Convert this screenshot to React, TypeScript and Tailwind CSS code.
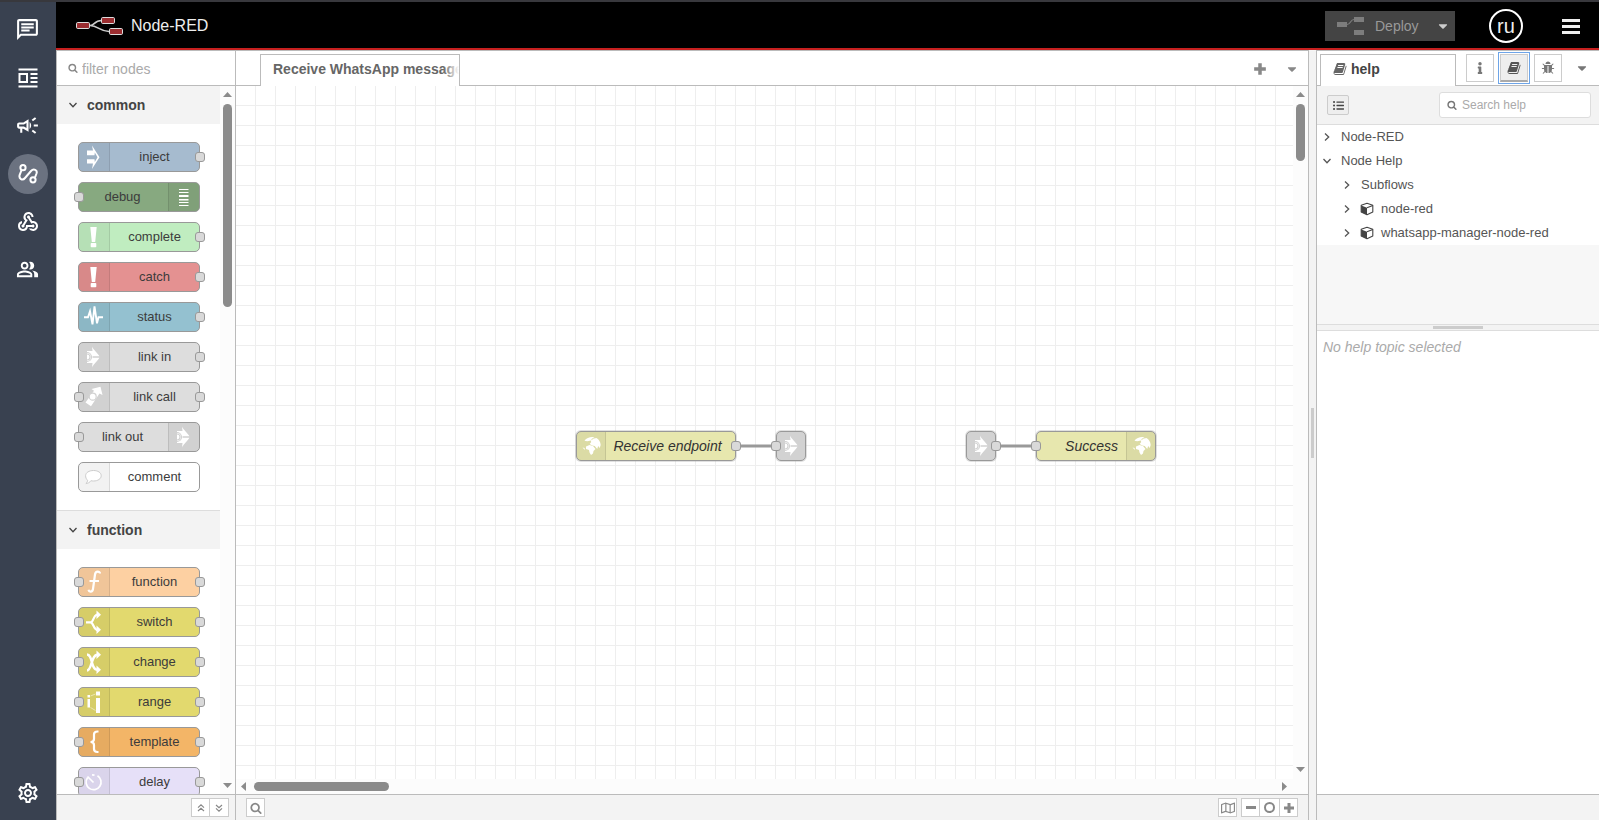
import type { ReactNode } from 'react';
import { MdOutlineChat, MdOutlineCampaign, MdWebhook, MdOutlinePeopleAlt, MdOutlineSettings } from 'react-icons/md';
import { FaCaretDown, FaInfo, FaListUl, FaRegMap } from 'react-icons/fa';
import { clsx } from 'clsx';

type IconProps = { className?: string };

const Search = ({ className }: IconProps) => (
  <svg viewBox="0 0 1792 1792" fill="currentColor" className={className}>
    <path d="M1216 832q0-185-131.5-316.5t-316.5-131.5-316.5 131.5-131.5 316.5 131.5 316.5 316.5 131.5 316.5-131.5 131.5-316.5zm512 832q0 52-38 90t-90 38q-54 0-90-38l-343-342q-179 124-399 124-143 0-273.5-55.5t-225-150-150-225-55.5-273.5 55.5-273.5 150-225 225-150 273.5-55.5 273.5 55.5 225 150 150 225 55.5 273.5q0 220-124 399l343 343q37 37 37 90z" />
  </svg>
);

const Book = ({ className }: IconProps) => (
  <svg viewBox="0 0 1792 1792" fill="currentColor" className={className}>
    <path d="M1703 478q40 57 18 129l-275 906q-19 64-76.5 107.5t-122.5 43.5h-923q-77 0-148.5-53.5t-99.5-131.5q-24-67-2-127 0-4 3-27t4-37q1-8-3-21.5t-3-19.5q2-11 8-21t16.5-23.5 16.5-23.5q23-38 45-91.5t30-91.5q3-10 .5-30t-.5-28q3-11 17-28t17-23q21-36 42-92t25-90q1-9-2.5-32t.5-28q4-13 22-30.5t22-22.5q19-26 42.5-84.5t27.5-96.5q1-8-3-25.5t-2-26.5q2-8 9-18t18-23 17-21q8-12 16.5-30.5t15-35 16-36 19.5-32 26.5-23.5 36-11.5 47.5 5.5l-1 3q38-9 51-9h761q74 0 114 56t18 130l-274 906q-36 119-71.5 153.5t-128.5 34.5h-869q-27 0-38 15-11 16-1 43 24 70 144 70h923q29 0 56-15.5t35-41.5l300-987q7-22 5-57 38 15 59 43zm-1064 2q-4 13 2 22.5t20 9.5h608q13 0 25.5-9.5t16.5-22.5l21-64q4-13-2-22.5t-20-9.5h-608q-13 0-25.5 9.5t-16.5 22.5zm-83 256q-4 13 2 22.5t20 9.5h608q13 0 25.5-9.5t16.5-22.5l21-64q4-13-2-22.5t-20-9.5h-608q-13 0-25.5 9.5t-16.5 22.5z" />
  </svg>
);

const Bug = ({ className }: IconProps) => (
  <svg viewBox="0 0 1792 1792" fill="currentColor" className={className}>
    <path d="M1696 960q0 26-19 45t-45 19h-224q0 171-67 290l208 209q19 19 19 45t-19 45q-18 19-45 19t-45-19l-198-197q-5 5-15 13t-42 28.5-65 36.5-82 29-97 13v-896h-128v896q-51 0-101.5-13.5t-87-33-66-39-43.5-32.5l-15-14-183 207q-20 21-48 21-24 0-43-16-19-18-20.5-44.5t15.5-46.5l202-227q-58-114-58-274h-224q-26 0-45-19t-19-45 19-45 45-19h224v-294l-173-173q-19-19-19-45t19-45 45-19 45 19l173 173h844l173-173q19-19 45-19t45 19 19 45-19 45l-173 173v294h224q26 0 45 19t19 45zm-480-576h-640q0-133 93.5-226.5t226.5-93.5 226.5 93.5 93.5 226.5z" />
  </svg>
);

const Plus = ({ className }: IconProps) => (
  <svg viewBox="0 0 12 12" fill="currentColor" className={className}>
    <path d="M4.500 1h3v3.500H11v3H7.500V11h-3V7.500H1v-3h3.500z" />
  </svg>
);

const Chevron = ({ className }: IconProps) => (
  <svg viewBox="0 0 10 10" fill="none" stroke="currentColor" strokeWidth="1.300" className={className}>
    <path d="M1.500 3l3.500 3.700L8.500 3" />
  </svg>
);

const DoubleChevron = ({ className }: IconProps) => (
  <svg viewBox="0 0 10 10" fill="none" stroke="currentColor" strokeWidth="1.200" className={className}>
    <path d="M2 2l3 2.700L8 2M2 5.400l3 2.700 3-2.700" />
  </svg>
);

const Cube = () => (
  <svg viewBox="0 0 14 14" className="h-3.5 w-3.5 text-[#444]">
    <path d="M7 1.300L12.800 3.300v6.700L7 12.700 1.200 10V3.300z" fill="none" stroke="currentColor" strokeWidth="1.100" strokeLinejoin="round" />
    <path d="M1.200 3.500L7 5.700v7L1.200 10z" fill="currentColor" />
    <path d="M7 5.700l5.800-2.300" stroke="currentColor" strokeWidth="1.100" />
  </svg>
);

const Logo = () => (
  <svg viewBox="0 0 48 20" className="h-5 w-12">
    <path d="M14 9.500c5 0 4-5 11.500-5M14 9.500c8 0 10 6 19 6" fill="none" stroke="#ccc" strokeWidth="1.600" />
    <g fill="#9b2d30" stroke="#ddd">
      <rect x=".5" y="6.500" width="13" height="6" rx="1.200" />
      <rect x="25.500" y="1.500" width="13" height="6" rx="1.200" />
      <rect x="33.500" y="12.500" width="13" height="6" rx="1.200" />
    </g>
  </svg>
);

const DeployIcon = () => (
  <svg viewBox="0 0 28 20" className="h-5 w-7" fill="#7d7d7d">
    <rect x="0" y="6" width="10" height="5" />
    <rect x="17" y="1" width="10" height="5" />
    <rect x="17" y="14" width="10" height="5" />
    <path d="M10 8.500c4 0 3-5 7-5" fill="none" stroke="#7d7d7d" strokeWidth="1.200" />
  </svg>
);

const Feed = () => (
  <svg viewBox="0 0 20 20" className="h-5 w-5" fill="none" stroke="white" strokeWidth="2">
    <path d="M.5 1.500h19M.5 18.500h19M12.500 6h7M12.500 10h7M12.500 14h7" strokeWidth="1.900" />
    <rect x="1.500" y="6" width="7.500" height="8" />
  </svg>
);

const Flow = () => (
  <svg viewBox="0 0 20 20" className="h-5 w-5" fill="none" stroke="white" strokeWidth="2">
    <circle cx="5" cy="3.700" r="2.600" />
    <circle cx="15" cy="15.800" r="2.600" />
    <path d="M3.600 6L1.700 10.800c-1.200 4 2.800 6.200 5.300 3.200l6-7c2.700-3 6.700-1 5.500 2.500L17 13.500" />
  </svg>
);

const Globe = () => (
  <>
    <path d="M7.500 8.500C9.500 6 13 4.700 16 5l1.500 1-2.500.5-1 2-3.500.8-2-.3z" />
    <path d="M17 6.500l2.500-.5c2.500 1.500 4 4 4.200 7l-1 3-1.500-2-1 3-2.500-3-2.500-.5-2.500-1.500 1.500-2-.5-1.500z" />
    <path d="M9 14.500l3.500-1.500 3.500 1 2.500 3-2 2-.5 2.500-2 1.500-1.500-2.500-.5-2.500-3-1zM5.500 15.500l2 .5.500 2z" />
  </>
);

const LinkArrow = () => (
  <>
    <path d="M8 8h5.500L13 3.500c1 2.500 4 5 7.500 9.800h-7v1.400h7C17 19.500 14 22 13 24.500l.5-4.500H8z" />
    <path d="M8 9.500a4.500 4.500 0 0 1 0 9M8 11a3 3 0 0 1 0 6" fill="none" stroke="#d2d2d2" strokeWidth="1.100" />
  </>
);

const glyphs: Record<string, ReactNode> = {
  inject: <path d="M8 7.500h6L13 2.500l7.500 11.700L13 26l1-5.500H8v-4.300h7.500l.3 2.800 2.700-4.800-2.700-4.700-.3 2.800H8z" />,
  debug: <path d="M10 6h9.500v1H10zM10 9h9.500v1H10zM10 12h9.500v2H10zM10 16h9.500v1.500H10zM10 19h9.500v1H10zM10 22h9.500v1H10z" />,
  bang: <path d="M11.300 4h6.400l-1.500 15h-3.400zM12.500 20h4a.8.8 0 0 1 .8.800v2.700a.8.800 0 0 1-.8.800h-4a.8.800 0 0 1-.8-.8v-2.700a.8.800 0 0 1 .8-.8z" />,
  status: <path d="M5 14.300h4l2-6 2.500 13 2-18 2.500 17 1.500-6h4.500" fill="none" stroke="white" strokeWidth="1.900" />,
  link: <LinkArrow />,
  linkCall: (
    <>
      <path d="M12.500 6l9-2.200 2 8.200-3-1.500L12 23.300 6.500 19.500 15 7.700z" />
      <circle cx="13.700" cy="13.700" r="3.500" stroke="#d2d2d2" strokeWidth="1.200" />
    </>
  ),
  comment: <path d="M14.500 7.500c4.500 0 7.700 2.200 7.700 5.200s-3.200 5.300-7.700 5.300c-1 0-1.800-.1-2.600-.3-1 1.700-3 2.800-5 2.800 1.200-.8 1.700-2 1.700-3.300-1.300-1-2-2.700-2-4.500 0-3 3.400-5.200 7.900-5.200z" stroke="#ccc" />,
  function: <path d="M21 5.500c0-2.500-4.500-3-5 1L14 21c-.5 3.500-4 3.300-4.500.8M10.500 13h9.500" fill="none" stroke="white" strokeWidth="2.200" />,
  switch: (
    <>
      <path d="M7 14.300h4.500c3 0 2.500-6 6-7.500h2M11.500 14.300c3 0 2.500 6 6 7.500h2" fill="none" stroke="white" strokeWidth="2.200" />
      <path d="M17.500 2.500l4.500 4.200-4.500 4.300zM17.500 17.500l4.500 4.300-4.500 4.200z" />
    </>
  ),
  change: (
    <>
      <path d="M8 6.500c6 0 3.500 15.300 10.500 15.300M8 22.500c5 0 4-15.800 10.500-15.800" fill="none" stroke="white" strokeWidth="2.400" />
      <path d="M17.500 2.500l4.500 4.200-4.500 4.300zM17.500 17.500l4.500 4.300-4.500 4.200z" />
    </>
  ),
  range: (
    <>
      <path d="M8.500 7H11v2.500H8.500zM8.500 11H11v8.500H8.500zM17 3.500h4v4h-4zM17 10h4v15h-4z" />
      <path d="M11.500 8l5-2M11.500 19.500l5 3" stroke="white" strokeWidth=".7" opacity=".7" />
    </>
  ),
  template: <path d="M19.500 3.500h-1c-2.500 0-3.500 1-3.500 3v4.500c0 2-1 3-3.500 3 2.500 0 3.500 1 3.500 3v4c0 2 1 3 3.500 3h1" fill="none" stroke="white" strokeWidth="2.200" />,
  delay: <path d="M18.500 7.800a7.500 7.500 0 1 1-10 2M8.500 8.500l6 6M13 6.800l2.500.3" fill="none" stroke="white" strokeWidth="1.700" />,
  globe: <Globe />,
};

const Glyph = ({ name }: { name: string }) => (
  <svg viewBox="0 0 30 28" className="h-7 w-[30px]" fill="white">{glyphs[name]}</svg>
);

const Port = ({ className }: IconProps) => (
  <span className={clsx('absolute top-[9px] h-2.5 w-2.5 rounded-[3px] border border-[#999] bg-[#d9d9d9]', className)} />
);

interface NodeDef {
  label: string;
  icon: string;
  color: string;
  input?: boolean;
  output?: boolean;
  iconRight?: boolean;
}

const categories: { name: string; nodes: NodeDef[] }[] = [
  {
    name: 'common',
    nodes: [
      { label: 'inject', icon: 'inject', color: 'bg-[#a6bbcf]', output: true },
      { label: 'debug', icon: 'debug', color: 'bg-[#87a980]', input: true, iconRight: true },
      { label: 'complete', icon: 'bang', color: 'bg-[#c0edc0]', output: true },
      { label: 'catch', icon: 'bang', color: 'bg-[#e49191]', output: true },
      { label: 'status', icon: 'status', color: 'bg-[#94c1d0]', output: true },
      { label: 'link in', icon: 'link', color: 'bg-[#ddd]', output: true },
      { label: 'link call', icon: 'linkCall', color: 'bg-[#ddd]', input: true, output: true },
      { label: 'link out', icon: 'link', color: 'bg-[#ddd]', input: true, iconRight: true },
      { label: 'comment', icon: 'comment', color: 'bg-white' },
    ],
  },
  {
    name: 'function',
    nodes: [
      { label: 'function', icon: 'function', color: 'bg-[#fdd0a2]', input: true, output: true },
      { label: 'switch', icon: 'switch', color: 'bg-[#e2d96e]', input: true, output: true },
      { label: 'change', icon: 'change', color: 'bg-[#e2d96e]', input: true, output: true },
      { label: 'range', icon: 'range', color: 'bg-[#e2d96e]', input: true, output: true },
      { label: 'template', icon: 'template', color: 'bg-[#f3b567]', input: true, output: true },
      { label: 'delay', icon: 'delay', color: 'bg-[#e6e0f8]', input: true, output: true },
    ],
  },
];

function PaletteNode({ label, icon, color, input, output, iconRight }: NodeDef) {
  return (
    <li className={clsx('relative flex h-[30px] w-[122px] rounded-[5px] border border-[#999]', color, iconRight && 'flex-row-reverse')}>
      <span className={clsx('w-[31px] shrink-0 border-black/10 bg-black/5', iconRight ? 'rounded-r border-l' : 'rounded-l border-r')}>
        <Glyph name={icon} />
      </span>
      <span className={clsx('flex-1 text-center text-[13px] leading-7 text-[#3c3c3c]', iconRight && 'pr-0.5')}>{label}</span>
      {input && <Port className="-left-[5px]" />}
      {output && <Port className="-right-1.5" />}
    </li>
  );
}

const ArrowV = ({ down }: { down?: boolean }) => (
  <svg viewBox="0 0 9 5" className="h-[5px] w-[9px]" fill="#8b8b8b">
    <path d={down ? 'M0 0h9L4.500 5z' : 'M0 5h9L4.500 0z'} />
  </svg>
);

const ArrowH = ({ right }: { right?: boolean }) => (
  <svg viewBox="0 0 5 9" className="h-[9px] w-[5px]" fill="#8b8b8b">
    <path d={right ? 'M0 0v9l5-4.500z' : 'M5 0v9L0 4.500z'} />
  </svg>
);

function Palette() {
  return (
    <section className="flex w-[180px] shrink-0 flex-col border-x border-t border-[#bbb]">
      <label className="flex h-[35px] shrink-0 items-center border-b border-[#bbb] pl-[11px]">
        <Search className="h-2.5 w-2.5 shrink-0 text-[#888]" />
        <input aria-label="Filter nodes" placeholder="filter nodes" className="ml-1 w-full min-w-0 pt-0.5 text-sm outline-none placeholder:text-[#aaa]" />
      </label>
      <div className="flex min-h-0 flex-1">
        <div className="min-w-0 flex-1 overflow-hidden">
          {categories.map(({ name, nodes }) => (
            <div key={name} className="border-b border-[#ddd]">
              <button className="flex h-[38px] w-full items-center gap-[9px] bg-[#f3f3f3] pl-[11px] text-sm font-bold text-[#444]">
                <Chevron className="h-2.5 w-2.5" />
                {name}
              </button>
              <ul className="flex flex-col gap-2.5 py-[18px] pl-[21px]">
                {nodes.map((node) => <PaletteNode key={node.label} {...node} />)}
              </ul>
            </div>
          ))}
        </div>
        <div className="flex w-[15px] flex-col items-center bg-[#fcfcfc] pt-1.5 pb-1.5">
          <ArrowV />
          <div className="mt-[7px] h-[203px] w-[9px] rounded-full bg-[#8b8b8b]" />
          <div className="flex-1" />
          <ArrowV down />
        </div>
      </div>
      <footer className="flex h-[26px] shrink-0 items-center justify-end border-t border-[#bbb] bg-[#f3f3f3] pr-1.5">
        <button aria-label="Collapse all" className="flex h-[19px] w-[19px] items-center justify-center border border-[#ccc] bg-white text-[#888]">
          <DoubleChevron className="h-2.5 w-2.5 rotate-180" />
        </button>
        <button aria-label="Expand all" className="flex h-[19px] w-[19px] items-center justify-center border border-l-0 border-[#ccc] bg-white text-[#888]">
          <DoubleChevron className="h-2.5 w-2.5" />
        </button>
      </footer>
    </section>
  );
}

// Nodes sit at free coordinates on the flow canvas
function FlowCanvas() {
  return (
    <div className="relative min-w-0 flex-1 overflow-hidden bg-white bg-[linear-gradient(to_right,transparent_19px,#eee_19px),linear-gradient(to_bottom,transparent_19px,#eee_19px)] bg-[size:20px_20px]">
      <svg className="absolute inset-0 h-full w-full" stroke="#999" strokeWidth="3">
        <path d="M504 360h32M764 360h32" />
      </svg>
      <div className="absolute top-[345px] left-[340px] flex h-[30px] w-40 rounded-[5px] border border-[#999] bg-[#e7e7ae] ring-1 ring-[#999]/30">
        <span className="w-[29px] shrink-0 rounded-l border-r border-black/10 bg-black/5"><Glyph name="globe" /></span>
        <span className="flex-1 pr-1.5 text-center text-sm leading-7 text-[#333] italic">Receive endpoint</span>
        <Port className="-right-1.5" />
      </div>
      <div className="absolute top-[345px] left-[540px] h-[30px] w-[30px] rounded-[5px] border border-[#999] bg-[#d2d2d2] ring-1 ring-[#999]/30">
        <Glyph name="link" />
        <Port className="-left-1.5" />
      </div>
      <div className="absolute top-[345px] left-[730px] h-[30px] w-[30px] rounded-[5px] border border-[#999] bg-[#d2d2d2] ring-1 ring-[#999]/30">
        <Glyph name="link" />
        <Port className="-right-1.5" />
      </div>
      <div className="absolute top-[345px] left-[800px] flex h-[30px] w-[120px] flex-row-reverse rounded-[5px] border border-[#999] bg-[#e7e7ae] ring-1 ring-[#999]/30">
        <span className="w-[29px] shrink-0 rounded-r border-l border-black/10 bg-black/5"><Glyph name="globe" /></span>
        <span className="flex-1 pr-2 text-right text-sm leading-7 text-[#333] italic">Success</span>
        <Port className="-left-1.5" />
      </div>
    </div>
  );
}

const footBtn = 'flex h-[19px] w-[19px] items-center justify-center border border-[#ccc] bg-white text-[#888]';

function Workspace() {
  return (
    <section className="flex min-w-0 flex-1 flex-col border-t border-r border-[#bbb]">
      <div className="flex h-[35px] shrink-0 items-end">
        <div className="w-6 self-stretch border-b border-[#bbb]" />
        <div className="relative h-8 w-[200px] overflow-hidden border-x border-t border-[#bbb] pl-3 text-sm leading-7 font-bold whitespace-nowrap text-[#666]">
          Receive WhatsApp message
          <span className="absolute inset-y-0 right-0 w-4 bg-linear-to-r from-white/0 to-white" />
        </div>
        <div className="flex flex-1 items-center justify-end self-stretch border-b border-[#bbb] pt-px text-[#888]">
          <button aria-label="Add flow" className="flex w-8 justify-center"><Plus className="h-3.5 w-3.5" /></button>
          <button aria-label="List flows" className="flex w-8 justify-center"><FaCaretDown className="h-3.5 w-3.5" /></button>
        </div>
      </div>
      <div className="flex min-h-0 flex-1">
        <div className="flex min-w-0 flex-1 flex-col">
          <FlowCanvas />
          <div className="flex h-[15px] shrink-0 items-center bg-[#fcfcfc] pr-1.5 pl-[5px]">
            <ArrowH />
            <div className="ml-2 h-[9px] w-[135px] rounded-full bg-[#8b8b8b]" />
            <div className="flex-1" />
            <ArrowH right />
          </div>
        </div>
        <div className="flex w-[15px] shrink-0 flex-col items-center bg-[#fcfcfc] pt-1.5 pb-[22px]">
          <ArrowV />
          <div className="mt-[7px] h-[57px] w-[9px] rounded-full bg-[#8b8b8b]" />
          <div className="flex-1" />
          <ArrowV down />
        </div>
      </div>
      <footer className="flex h-[26px] shrink-0 items-center border-t border-[#bbb] bg-[#f3f3f3] px-2.5">
        <button aria-label="Search flows" className={footBtn}><Search className="h-3 w-3" /></button>
        <div className="flex-1" />
        <button aria-label="Toggle navigator" className={clsx(footBtn, 'mr-1')}><FaRegMap className="h-3.5 w-3.5" /></button>
        <button aria-label="Zoom out" className={footBtn}><span className="h-[3px] w-2.5 bg-[#888]" /></button>
        <button aria-label="Reset zoom" className={clsx(footBtn, 'border-x-0')}><span className="h-[11px] w-[11px] rounded-full border-2 border-[#888]" /></button>
        <button aria-label="Zoom in" className={footBtn}><Plus className="h-3 w-3" /></button>
      </footer>
    </section>
  );
}

function TreeRow({ label, open, child, pack }: { label: string; open?: boolean; child?: boolean; pack?: boolean }) {
  return (
    <li className={clsx('flex h-6 items-center text-[13px] text-[#555]', child ? 'pl-[25px]' : 'pl-[5px]')}>
      <Chevron className={clsx('mr-[9px] h-2.5 w-2.5', !open && '-rotate-90')} />
      {pack && <span className="mr-1.5 -ml-px"><Cube /></span>}
      <span className={pack ? 'ml-px' : ''}>{label}</span>
    </li>
  );
}

function HelpSidebar() {
  return (
    <aside className="flex w-[283px] shrink-0 flex-col border-t border-l border-[#bbb] bg-white">
      <div className="flex h-[35px] shrink-0 items-end">
        <div className="w-[3px] self-stretch border-b border-[#bbb]" />
        <div className="flex h-8 w-[136px] items-center gap-1 border-x border-t border-[#bbb] pb-[3px] pl-3 text-sm font-bold text-[#444]">
          <Book className="h-3.5 w-3.5 text-[#666]" />
          help
        </div>
        <div className="flex flex-1 items-center self-stretch border-b border-[#bbb] pl-2.5 text-[#777]">
          <button aria-label="Information" className="flex h-7 w-7 items-center justify-center border border-[#ccc]"><FaInfo className="h-3 w-3" /></button>
          <button aria-label="Help" className="mx-1.5 flex h-7 w-7 items-center justify-center border border-b-2 border-[#ccc] border-b-[#aaa] bg-[#eee] text-[#555] ring-1 ring-[#6ea5e8] ring-offset-1"><Book className="h-3.5 w-3.5" /></button>
          <button aria-label="Debug" className="flex h-7 w-7 items-center justify-center border border-[#ccc]"><Bug className="h-3.5 w-3.5" /></button>
          <button aria-label="More tabs" className="flex flex-1 justify-center pl-0.5"><FaCaretDown className="h-3.5 w-3.5" /></button>
        </div>
      </div>
      <div className="flex h-[39px] shrink-0 items-center justify-between border-b border-[#ddd] bg-[#f3f3f3] pr-2 pl-2.5">
        <button aria-label="Show topics" className="flex h-5 w-[22px] items-center justify-center rounded-[2px] border border-[#ccc] bg-[#eee] text-[#444]"><FaListUl className="h-[11px] w-[11px]" /></button>
        <label className="flex h-[26px] w-[152px] items-center rounded-[3px] border border-[#ddd] bg-white pl-[7px]">
          <Search className="h-2.5 w-2.5 shrink-0 text-[#777]" />
          <input aria-label="Search help" placeholder="Search help" className="ml-[5px] w-full min-w-0 text-xs outline-none placeholder:text-[#aaa]" />
        </label>
      </div>
      <div className="h-[199px] shrink-0 bg-[#f7f7f7]">
        <ul className="bg-white">
          <TreeRow label="Node-RED" />
          <TreeRow label="Node Help" open />
          <TreeRow label="Subflows" child />
          <TreeRow label="node-red" child pack />
          <TreeRow label="whatsapp-manager-node-red" child pack />
        </ul>
      </div>
      <div className="flex h-[7px] shrink-0 items-center justify-center border-y border-[#ddd] bg-[#f3f3f3]">
        <span className="h-[3px] w-[50px] bg-[#ccc]" />
      </div>
      <p className="flex-1 px-1.5 py-1.5 text-sm text-[#aaa] italic">No help topic selected</p>
      <footer className="h-[26px] shrink-0 border-t border-[#bbb] bg-[#f3f3f3]" />
    </aside>
  );
}

const links = [
  { label: 'Chats', icon: <MdOutlineChat size={25} /> },
  { label: 'Templates', icon: <Feed /> },
  { label: 'Campaigns', icon: <MdOutlineCampaign size={25} /> },
  { label: 'Flows', icon: <Flow />, active: true },
  { label: 'Webhooks', icon: <MdWebhook size={24} /> },
  { label: 'Users', icon: <MdOutlinePeopleAlt size={23} /> },
];

export default function App() {
  return (
    <div className="flex h-screen flex-col bg-white font-['Liberation_Sans',Arial,sans-serif]">
      <div className="h-0.5 shrink-0 bg-[#38383d]" />
      <div className="flex min-h-0 flex-1">
        <nav className="flex w-14 shrink-0 flex-col items-center gap-2 bg-[#394150] pt-2 pb-[7px] text-white">
          {links.map(({ label, icon, active }) => (
            <a key={label} href="#" aria-label={label} className={clsx('flex h-10 w-10 items-center justify-center rounded-full pr-px pb-px', active && 'bg-[#6b7280]')}>
              {icon}
            </a>
          ))}
          <a href="#" aria-label="Settings" className="mt-auto flex h-10 w-10 items-center justify-center pr-px"><MdOutlineSettings size={24} /></a>
        </nav>
        <div className="flex min-w-0 flex-1 flex-col">
          <header className="flex h-12 shrink-0 items-center border-b-2 border-[#c7201f] bg-black pt-0.5 pr-[19px] pl-5">
            <Logo />
            <span className="ml-[7px] text-base text-[#eee]">Node-RED</span>
            <div className="flex-1" />
            <div className="flex h-[30px] w-[130px] items-center bg-[#444] text-sm text-[#999]">
              <button className="flex items-center gap-2.5 pl-3"><DeployIcon />Deploy</button>
              <button aria-label="Deploy options" className="ml-auto pr-[5px] text-[#ccc]"><FaCaretDown className="h-3.5 w-3.5" /></button>
            </div>
            <button className="ml-[34px] flex h-[34px] w-[34px] items-center justify-center rounded-full border-2 border-white text-xl leading-none text-[#eee]">ru</button>
            <button aria-label="Main menu" className="ml-[39px] flex w-[18px] flex-col gap-[3px]">
              <span className="h-[3px] w-full bg-[#eee]" />
              <span className="h-[3px] w-full bg-[#eee]" />
              <span className="h-[3px] w-full bg-[#eee]" />
            </button>
          </header>
          <main className="flex min-h-0 flex-1">
            <Palette />
            <Workspace />
            <div className="flex w-[7px] shrink-0 items-center justify-center bg-[#f3f3f3]">
              <span className="mb-1 h-[50px] w-[3px] bg-[#ccc]" />
            </div>
            <HelpSidebar />
          </main>
        </div>
      </div>
    </div>
  );
}
